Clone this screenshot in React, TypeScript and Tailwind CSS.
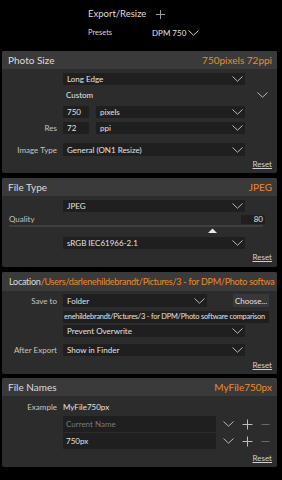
import React from "react";

const Chev = ({ c = "#b8b8b8" }: { c?: string }) => (
  <svg width="11" height="6" viewBox="0 0 11 6" className="shrink-0">
    <path d="M0.5 0.5 L5.5 5.2 L10.5 0.5" fill="none" stroke={c} strokeWidth="1" />
  </svg>
);

const Select = ({ text, w, h = "h-[12px]" }: { text: string; w: string; h?: string }) => (
  <div className={`${w} ${h} bg-[#1f1f1f] flex items-center justify-between pl-[4px] pr-[2px]`}>
    <span className="text-[8px] text-[#e2e2e2] leading-none whitespace-nowrap">{text}</span>
    <Chev />
  </div>
);

const Label = ({ children }: { children?: React.ReactNode }) => (
  <div className="w-[55px] shrink-0 text-right text-[8px] text-[#c4c4c4] leading-none">{children}</div>
);

const Row = ({ label, children, cls = "" }: { label?: string; children: React.ReactNode; cls?: string }) => (
  <div className={`flex items-center gap-[6px] ${cls}`}>
    <Label>{label}</Label>
    {children}
  </div>
);

const Reset = ({ cls = "" }: { cls?: string }) => (
  <div className={`flex justify-end pr-[5px] ${cls}`}>
    <span className="text-[8px] leading-[10px] text-[#d0d0d0] underline">Reset</span>
  </div>
);

const Header = ({ title, value, h = "h-[18px]" }: { title: React.ReactNode; value?: string; h?: string }) => (
  <div className={`${h} bg-[#3a3a3a] rounded-t-[2px] flex items-center justify-between pl-[6px] pr-[5px] overflow-hidden`}>
    <span className="text-[10px] text-[#dcdcdc] leading-none whitespace-nowrap">{title}</span>
    {value && <span className="text-[10px] text-[#e98b2d] leading-none whitespace-nowrap">{value}</span>}
  </div>
);

const Panel = ({ children, cls = "" }: { children: React.ReactNode; cls?: string }) => (
  <div className={`ml-[2px] w-[275px] bg-[#2c2c2c] rounded-[2px] ${cls}`}>{children}</div>
);

const Plus = () => (
  <svg width="11" height="11" viewBox="0 0 11 11">
    <path d="M5.5 0.5 V10.5 M0.5 5.5 H10.5" stroke="#bdbdbd" strokeWidth="1" />
  </svg>
);
const Minus = () => (
  <svg width="9" height="11" viewBox="0 0 9 11">
    <path d="M0.5 5.5 H8.5" stroke="#6a6a6a" strokeWidth="1" />
  </svg>
);

export default function App() {
  return (
    <div
      className="w-[282px] h-[480px] bg-black overflow-hidden"
      style={{ fontFamily: "Lato, 'Liberation Sans', sans-serif" }}
    >
      {/* top bar */}
      <div className="h-[51px] relative">
        <div className="absolute left-[88px] top-[8px] flex items-center gap-[10px]">
          <span className="text-[9.5px] text-[#dedede] leading-[12px]">Export/Resize</span>
          <svg width="9" height="9" viewBox="0 0 9 9">
            <path d="M4.5 0 V9 M0 4.5 H9" stroke="#9a9a9a" strokeWidth="1" />
          </svg>
        </div>
        <div className="absolute left-[88px] top-[28px] flex items-center">
          <span className="w-[64px] text-[7.5px] text-[#d8d8d8] leading-[10px]">Presets</span>
          <span className="text-[8px] text-[#e0e0e0] leading-[10px]">DPM 750</span>
          <span className="ml-[2px]"><Chev c="#d0d0d0" /></span>
        </div>
      </div>

      {/* Photo Size */}
      <Panel cls="h-[122px]">
        <Header title="Photo Size" value="750pixels 72ppi" />
        <Row cls="mt-[4px]">
          <Select text="Long Edge" w="w-[182px]" />
        </Row>
        <Row cls="mt-[4px] h-[12px]">
          <div className="flex-1 flex items-center justify-between pl-[3px] pr-[9px]">
            <span className="text-[8px] text-[#e2e2e2] leading-none">Custom</span>
            <Chev />
          </div>
        </Row>
        <Row cls="mt-[5px]">
          <div className="w-[26px] h-[12px] bg-[#1f1f1f] flex items-center pl-[4px] text-[8px] text-[#e2e2e2] leading-none">750</div>
          <div className="ml-[1px]"><Select text="pixels" w="w-[149px]" /></div>
        </Row>
        <Row label="Res" cls="mt-[4px]">
          <div className="w-[26px] h-[12px] bg-[#1f1f1f] flex items-center pl-[4px] text-[8px] text-[#e2e2e2] leading-none">72</div>
          <div className="ml-[1px]"><Select text="ppi" w="w-[149px]" /></div>
        </Row>
        <Row label="Image Type" cls="mt-[9px]">
          <Select text="General (ON1 Resize)" w="w-[182px]" h="h-[13px]" />
        </Row>
        <Reset cls="mt-[3px]" />
      </Panel>

      {/* File Type */}
      <Panel cls="mt-[5px] h-[89px]">
        <Header title="File Type" value="JPEG" />
        <Row cls="mt-[4px]">
          <Select text="JPEG" w="w-[182px]" />
        </Row>
        <div className="mt-[2px] flex items-center justify-between pl-[7px] pr-[12px] h-[10px]">
          <span className="text-[8px] text-[#c4c4c4] leading-none">Quality</span>
          <div className="w-[24px] h-[9px] bg-[#1f1f1f] flex items-center justify-end pr-[2px] text-[8px] text-[#e2e2e2] leading-none">80</div>
        </div>
        <div className="relative ml-[7px] w-[254px] h-[10px]">
          <div className="absolute left-0 right-0 top-[1px] h-[2px] bg-[#3f3f3f]" />
          <svg className="absolute left-[199px] top-[4px]" width="9" height="5" viewBox="0 0 9 5">
            <path d="M0 5 L4.5 0.5 L9 5 Z" fill="#e8e8e8" />
          </svg>
        </div>
        <Row cls="mt-[3px]">
          <Select text="sRGB IEC61966-2.1" w="w-[182px]" />
        </Row>
        <Reset cls="mt-[3px]" />
      </Panel>

      {/* Location */}
      <Panel cls="mt-[5px] h-[102px]">
        <div className="h-[19px] bg-[#3a3a3a] rounded-t-[2px] flex items-center pl-[7px] pr-[4px] overflow-hidden">
          <span className="text-[9px] tracking-[-0.25px] leading-none whitespace-nowrap">
            <span className="text-[#dcdcdc]">Location</span>
            <span className="text-[#e98b2d]">/Users/darlenehildebrandt/Pictures/3 - for DPM/Photo softwa</span>
          </span>
        </div>
        <Row label="Save to" cls="mt-[3px]">
          <Select text="Folder" w="w-[144px]" h="h-[13px]" />
          <div className="ml-[20px] w-[36px] h-[13px] bg-[#383838] rounded-[1px] flex items-center justify-center text-[8px] text-[#e0e0e0] leading-none">
            Choose...
          </div>
        </Row>
        <Row cls="mt-[4px]">
          <div className="w-[206px] h-[12px] bg-[#1f1f1f] overflow-hidden flex items-center pl-[1px]">
            <span className="text-[7.4px] tracking-[-0.2px] text-[#e2e2e2] leading-none whitespace-nowrap">
              enehildebrandt/Pictures/3 - for DPM/Photo software comparison
            </span>
          </div>
        </Row>
        <Row cls="mt-[2px]">
          <Select text="Prevent Overwrite" w="w-[182px]" />
        </Row>
        <Row label="After Export" cls="mt-[7px]">
          <Select text="Show in Finder" w="w-[182px]" />
        </Row>
        <Reset cls="mt-[4px]" />
      </Panel>

      {/* File Names */}
      <Panel cls="mt-[4px] h-[89px]">
        <Header title="File Names" value="MyFile750px" />
        <Row label="Example" cls="mt-[6px] h-[10px]">
          <span className="text-[8px] text-[#e2e2e2] leading-none">MyFile750px</span>
        </Row>
        <Row cls="mt-[4px]">
          <div className="w-[153px] h-[16px] bg-[#1f1f1f] flex items-center pl-[3px] text-[8px] text-[#7a7a7a] leading-none">Current Name</div>
          <div className="ml-[1px] flex items-center gap-[8px]">
            <Chev />
            <Plus />
            <Minus />
          </div>
        </Row>
        <Row cls="mt-[1px]">
          <div className="w-[153px] h-[16px] bg-[#1f1f1f] flex items-center pl-[3px] text-[8px] text-[#e2e2e2] leading-none">750px</div>
          <div className="ml-[1px] flex items-center gap-[8px]">
            <Chev />
            <Plus />
            <Minus />
          </div>
        </Row>
        <Reset cls="mt-[4px]" />
      </Panel>
    </div>
  );
}
